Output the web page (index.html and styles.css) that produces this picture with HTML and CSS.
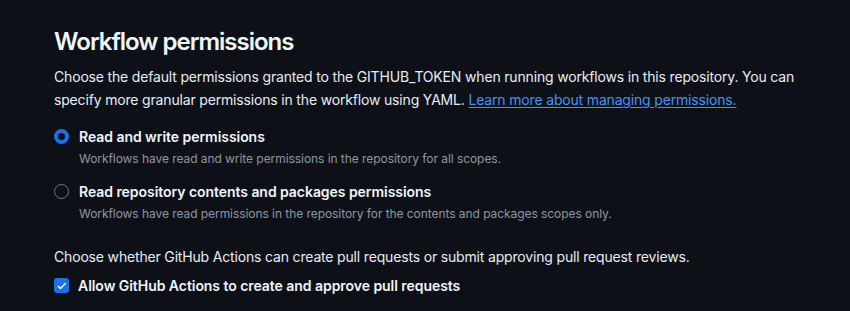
FILE: index.html
```html
<!DOCTYPE html>
<html lang="en">
<head>
<meta charset="utf-8">
<title>Workflow permissions</title>
<link rel="stylesheet" href="styles.css">
</head>
<body>
<main class="section">
  <h2 class="heading">Workflow permissions</h2>
  <p class="intro">Choose the default permissions granted to the GITHUB_TOKEN when running workflows in this repository. You can specify more granular permissions in the workflow using YAML. <a class="link" href="#">Learn more about managing permissions.</a></p>

  <div class="options">
    <label class="option">
      <span class="radio radio--checked"></span>
      <span class="option-text">
        <span class="option-label">Read and write permissions</span>
        <span class="option-note">Workflows have read and write permissions in the repository for all scopes.</span>
      </span>
    </label>
    <label class="option">
      <span class="radio"></span>
      <span class="option-text">
        <span class="option-label">Read repository contents and packages permissions</span>
        <span class="option-note">Workflows have read permissions in the repository for the contents and packages scopes only.</span>
      </span>
    </label>
  </div>

  <p class="intro intro--second">Choose whether GitHub Actions can create pull requests or submit approving pull request reviews.</p>
  <label class="check">
    <span class="checkbox">
      <svg viewBox="0 0 16 16" width="12" height="12"><path d="M3 8.3l3 3 6.5-6.6" fill="none" stroke="#fff" stroke-width="1.8" stroke-linecap="round" stroke-linejoin="round"/></svg>
    </span>
    <span class="option-label">Allow GitHub Actions to create and approve pull requests</span>
  </label>
</main>
</body>
</html>
```

FILE: styles.css
```css
html, body {
  margin: 0;
  padding: 0;
  background: #0d1117;
}
body {
  font-family: Inter, "Noto Sans", sans-serif;
  color: #e6edf3;
  -webkit-font-smoothing: antialiased;
  letter-spacing: -0.17px;
}
.section {
  padding: 24px 54px 0 54px;
}
.heading {
  margin: 0;
  font-size: 24px;
  font-weight: 600;
  line-height: 36px;
  color: #f0f6fc;
  letter-spacing: -1px;
}
.intro {
  margin: 5px 0 0 0;
  font-size: 14px;
  line-height: 23px;
  color: #e6edf3;
}
.link {
  color: #4493f8;
  text-decoration: underline;
  text-underline-offset: 2px;
}
.options {
  display: flex;
  flex-direction: column;
  gap: 11px;
  margin-top: 15px;
}
.option {
  display: flex;
  gap: 10px;
  align-items: flex-start;
}
.radio {
  width: 15px;
  height: 15px;
  border-radius: 50%;
  border: 1px solid #6e7681;
  box-sizing: border-box;
  margin-top: 3px;
  flex: none;
}
.radio--checked {
  border: 4px solid #1f6feb;
}
.option-text {
  display: flex;
  flex-direction: column;
}
.option-label {
  font-size: 14px;
  font-weight: 600;
  line-height: 21px;
  color: #f0f6fc;
  letter-spacing: -0.05px;
}
.option-note {
  font-size: 12px;
  line-height: 23px;
  color: #8d96a0;
  letter-spacing: -0.06px;
}
.intro--second {
  margin-top: 20px;
}
.check {
  display: flex;
  gap: 9px;
  align-items: center;
  margin-top: 7px;
}
.checkbox {
  width: 15px;
  height: 15px;
  border-radius: 3px;
  background: #1f6feb;
  display: flex;
  align-items: center;
  justify-content: center;
  flex: none;
}
```
